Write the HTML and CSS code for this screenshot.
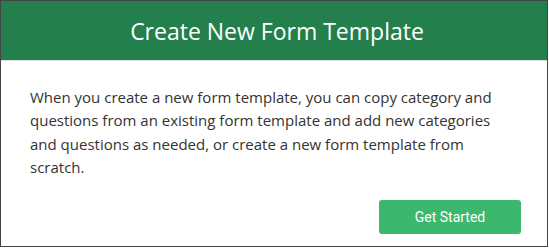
FILE: index.html
```html
<!DOCTYPE html>
<html lang="en">
<head>
    <meta charset="UTF-8">
    <meta name="viewport" content="width=device-width, initial-scale=1.0">
    <title>Create New Form Template</title>
    <link rel="stylesheet" href="styles.css">
</head>
<body>
    <div class="modal">
        <div class="modal-header">
            <h1>Create New Form Template</h1>
        </div>
        <div class="modal-body">
            <p>When you create a new form template, you can copy category and questions from an existing form template and add new categories and questions as needed, or create a new form template from scratch.</p>
        </div>
        <div class="modal-footer">
            <button class="btn-start">Get Started</button>
        </div>
    </div>
</body>
</html>
```

FILE: styles.css
```css
html, body {
    margin: 0;
    padding: 0;
    background-color: #fff;
}
.modal {
    box-sizing: border-box;
    width: 548px;
    height: 247px;
    border: 1px solid #444;
    background-color: #fff;
    font-family: "Open Sans", sans-serif;
    color: #333;
}
.modal-header {
    height: 59px;
    padding-left: 6px;
    background-color: #23804c;
    border-bottom: 1px solid #ddd;
    display: flex;
    align-items: center;
    justify-content: center;
}
.modal-header h1 {
    margin: 0;
    font-size: 23px;
    font-weight: 400;
    color: #fff;
}
.modal-body {
    padding: 25px 28px 0 29px;
}
.modal-body p {
    margin: 0;
    font-size: 15px;
    line-height: 23.4px;
}
.modal-footer {
    display: flex;
    justify-content: flex-end;
    padding: 20px 26px 0 0;
}
.btn-start {
    width: 142px;
    height: 34px;
    background-color: #3cb86e;
    color: #fff;
    border: none;
    border-radius: 3px;
    font-family: Roboto, sans-serif;
    font-size: 14px;
    cursor: pointer;
}
```
